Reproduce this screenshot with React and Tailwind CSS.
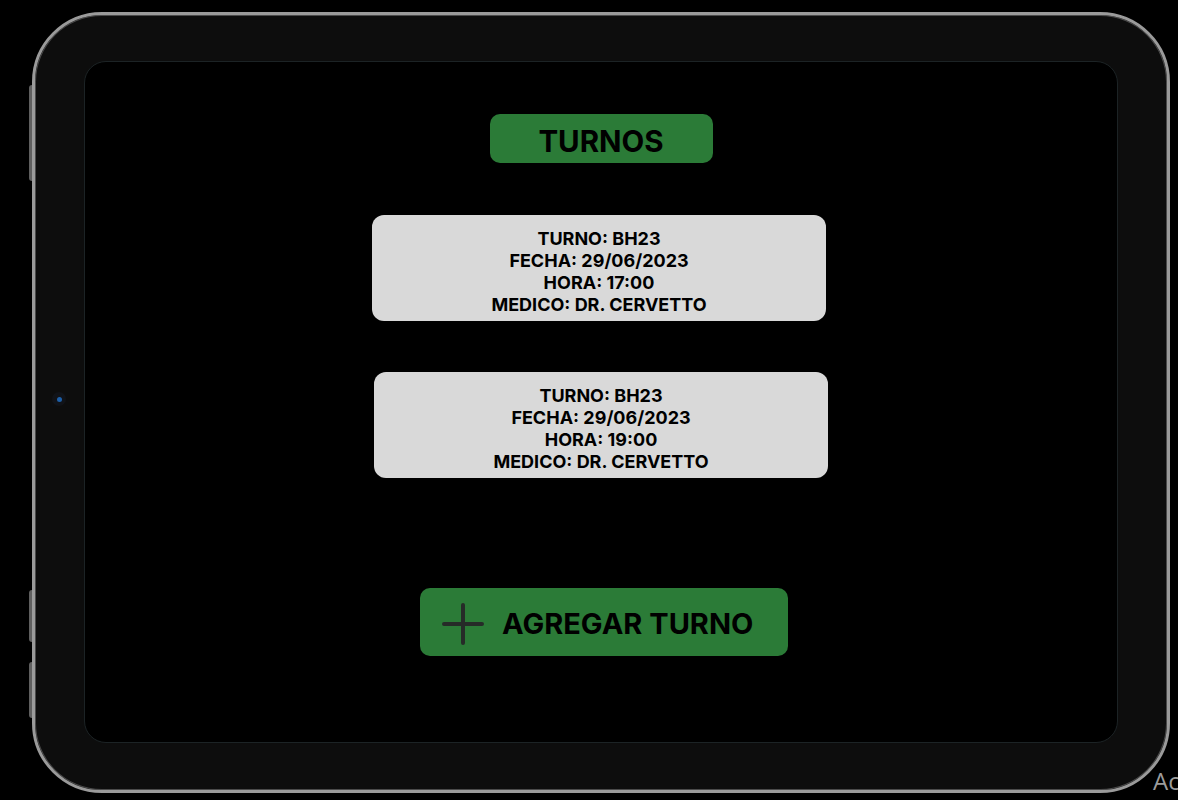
import React from 'react';

const turnos = [
  { id: 1, codigo: 'BH23', fecha: '29/06/2023', hora: '17:00', medico: 'DR. CERVETTO', shift: 'ml-[-2px]' },
  { id: 2, codigo: 'BH23', fecha: '29/06/2023', hora: '19:00', medico: 'DR. CERVETTO', shift: 'ml-0' },
];

const PlusIcon = () => (
  <svg width="42" height="42" viewBox="0 0 42 42" fill="none">
    <path d="M21 2v38M2 21h38" stroke="#262b28" strokeWidth="4" strokeLinecap="round" />
  </svg>
);

export default function App() {
  return (
    <div className="relative w-[1178px] h-[800px] bg-black overflow-hidden font-['Inter','Noto_Sans',sans-serif]">
      {/* side buttons of the tablet */}
      <div className="absolute left-[29px] top-[85px] w-[3px] h-[96px] rounded-l bg-[#5f5f5f]" />
      <div className="absolute left-[29px] top-[590px] w-[3px] h-[52px] rounded-l bg-[#5f5f5f]" />
      <div className="absolute left-[29px] top-[662px] w-[3px] h-[56px] rounded-l bg-[#5f5f5f]" />

      {/* device frame */}
      <div className="ml-[32px] mt-[12px] w-[1138px] h-[781px] rounded-[70px] border-[3px] border-[#9a9a9a] bg-[#0d0d0d] pl-[49px] pr-[49px] pt-[46px] shadow-[inset_0_0_0_1px_#4a4a4a]">
        <div className="relative w-[1034px] h-[682px] rounded-[22px] border border-[#1c2325] bg-black flex flex-col items-center">
          {/* camera */}
          <div className="absolute left-[-33px] top-[330px] w-[14px] h-[14px] rounded-full bg-[#111318] flex items-center justify-center">
            <div className="w-[5px] h-[5px] rounded-full bg-[#1d5fa8]" />
          </div>

          <div className="mt-[52px] w-[223px] h-[49px] rounded-[10px] bg-[#2b7b37] flex items-center justify-center pt-[6px]">
            <span className="text-[29.5px] font-bold text-black">TURNOS</span>
          </div>

          <div className="mt-[52px] flex flex-col gap-[51px]">
            {turnos.map((t) => (
              <div
                key={t.id}
                className={`${t.shift} w-[454px] h-[106px] rounded-[12px] bg-[#d9d9d9] pt-[13px] flex flex-col items-center text-[18px] leading-[22px] font-bold text-black`}
              >
                <span>TURNO: {t.codigo}</span>
                <span>FECHA: {t.fecha}</span>
                <span>HORA: {t.hora}</span>
                <span>MEDICO: {t.medico}</span>
              </div>
            ))}
          </div>

          <button className="mt-[110px] ml-[6px] w-[368px] h-[68px] rounded-[10px] bg-[#2b7b37] flex items-center pl-[22px] pt-[3px]">
            <PlusIcon />
            <span className="ml-[18px] text-[29px] font-bold text-black">AGREGAR TURNO</span>
          </button>
        </div>
      </div>

      {/* watermark */}
      <span className="absolute left-[1153px] top-[763px] whitespace-nowrap text-[24px] text-[#9c9c9c] font-['Open_Sans',sans-serif]">
        Activar Windows
      </span>
    </div>
  );
}
